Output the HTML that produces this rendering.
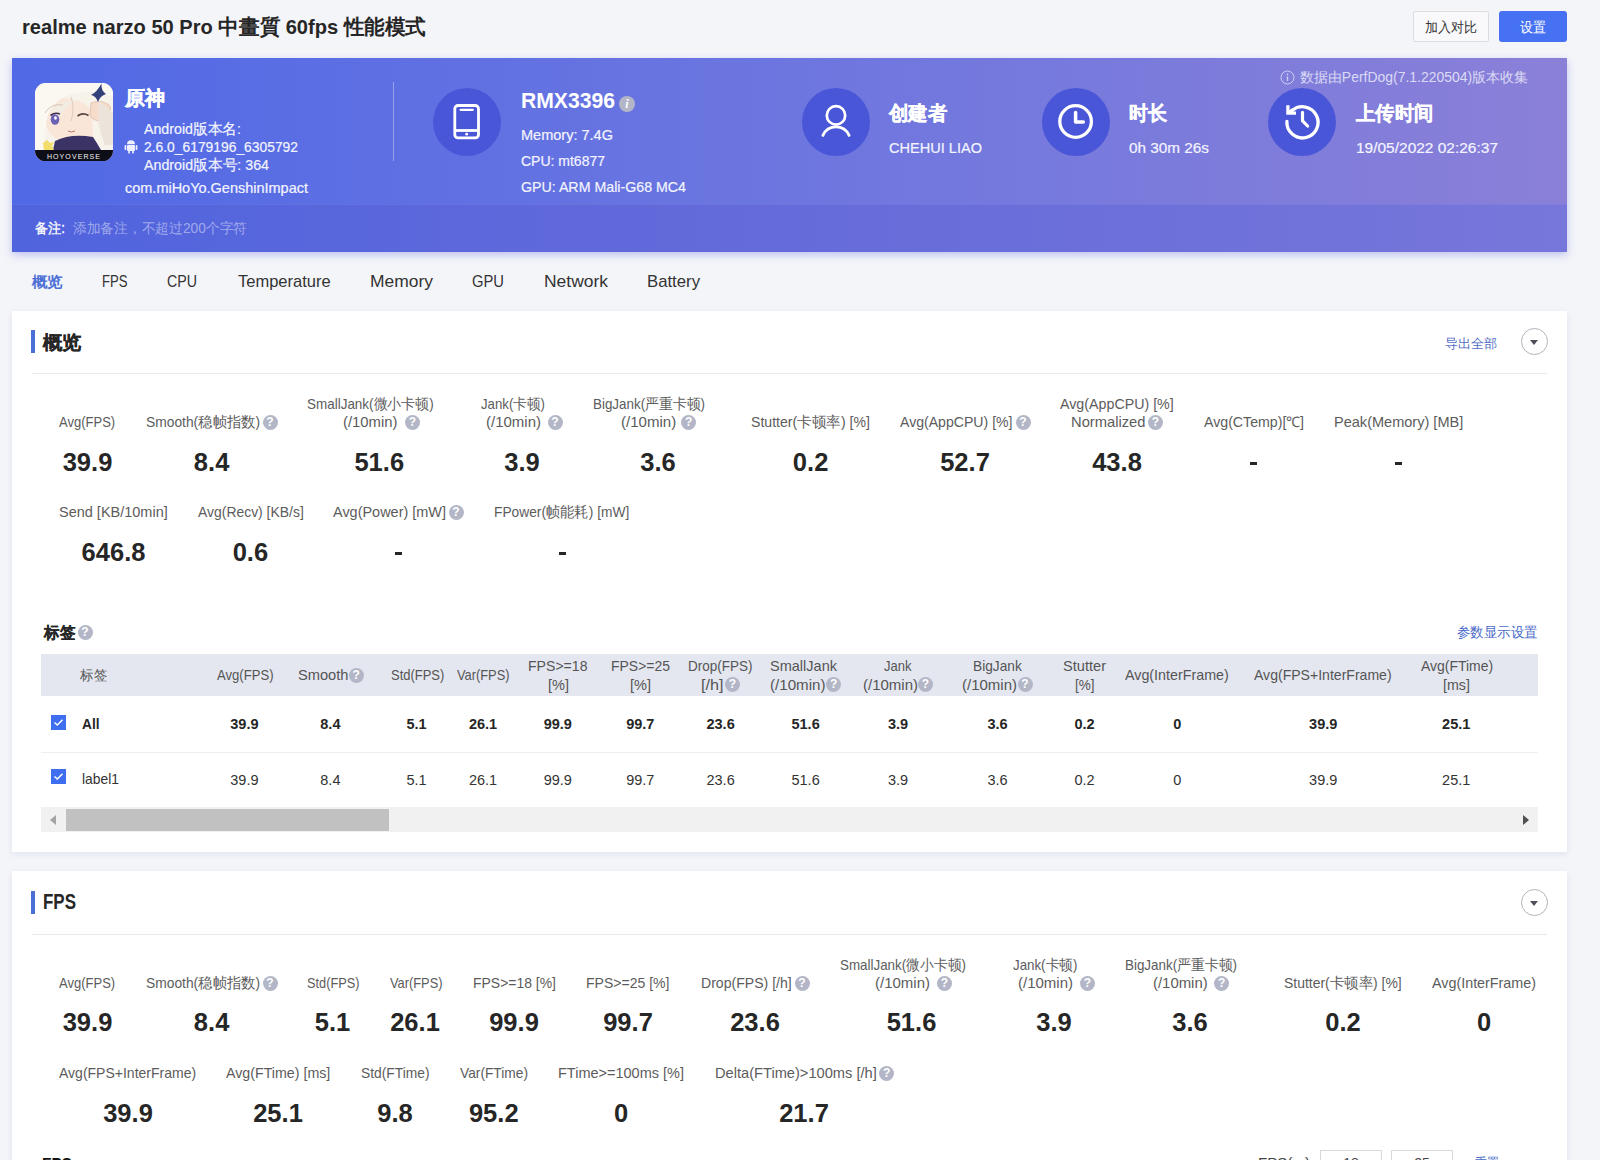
<!DOCTYPE html><html><head><meta charset="utf-8"><title>PerfDog</title><style>

html,body{margin:0;padding:0;}
body{width:1600px;height:1160px;overflow:hidden;position:relative;background:#f4f5f9;font-family:"Liberation Sans",sans-serif;}
.t{position:absolute;white-space:nowrap;}
.q{position:absolute;border-radius:50%;color:#fff;text-align:center;font-weight:700;}

</style></head><body>
<div class="t" id="t1" style="left:22.00px;top:16.57px;font-size:20.50px;line-height:20.50px;color:#262626;font-weight:700;transform:scaleX(0.9794);transform-origin:0 0;">realme narzo 50 Pro 中畫質 60fps 性能模式</div>
<div style="position:absolute;left:1413px;top:11px;width:74px;height:29px;border:1px solid #dcdde3;background:#f9f9fb;border-radius:2px"></div>
<div class="t" id="t2" style="left:1451.00px;top:20.10px;font-size:14.00px;line-height:14.00px;color:#333;font-weight:400;transform:translateX(-50%) scaleX(0.9286);transform-origin:50% 0;">加入对比</div>
<div style="position:absolute;left:1499px;top:11px;width:68px;height:31px;background:#4571f2;border-radius:3px"></div>
<div class="t" id="t3" style="left:1533.00px;top:20.10px;font-size:14.00px;line-height:14.00px;color:#fff;font-weight:400;transform:translateX(-50%) scaleX(0.9286);transform-origin:50% 0;">设置</div>
<div id="banner" style="position:absolute;left:12px;top:58px;width:1555px;height:194px;background:linear-gradient(90deg,#5069e6 0%,#6a75e0 45%,#8a80d8 100%);box-shadow:0 3px 8px rgba(90,100,220,0.35)"></div>
<div style="position:absolute;left:12px;top:204px;width:1555px;height:48px;border-top:1px solid rgba(255,255,255,0.07);box-sizing:border-box;background:linear-gradient(90deg,#5064de 0%,#636ada 45%,#7776da 100%)"></div>
<svg style="position:absolute;left:35px;top:82.5px" width="78" height="78.5" viewBox="0 0 78 78.5">
<defs><clipPath id="ic"><rect x="0" y="0" width="78" height="78.5" rx="11" ry="11"/></clipPath></defs>
<g clip-path="url(#ic)">
<rect width="78" height="79" fill="#f7f2ea"/>
<path d="M12 20 Q20 14 34 16 Q50 18 57 28 L58 56 Q44 62 26 58 Q12 52 11 40 Z" fill="#f9e6d8"/>
<path d="M0 0 L78 0 L78 14 Q60 6 40 10 Q22 14 14 30 Q8 44 10 70 L0 70 Z" fill="#fbf8f2"/>
<path d="M14 30 Q24 16 42 18 Q30 22 26 34 Q22 26 14 30Z" fill="#f3ece2"/>
<path d="M10 30 Q16 20 28 22" stroke="#cdb8a8" stroke-width="0.8" fill="none"/>
<path d="M36 14 Q40 26 36 38" stroke="#d8c4b4" stroke-width="0.8" fill="none"/>
<path d="M15.5 32.5 Q20 29 25 31" stroke="#3a3050" stroke-width="1.6" fill="none"/>
<ellipse cx="20" cy="36.5" rx="4.3" ry="5.2" fill="#6a62b2"/>
<ellipse cx="20.5" cy="35" rx="1.4" ry="1.8" fill="#fff"/>
<path d="M42.5 33 Q48 29 53.5 32.5" stroke="#5a4440" stroke-width="1.6" fill="none"/>
<path d="M33 48 Q36 50 40 48" stroke="#b07a70" stroke-width="1" fill="none"/>
<path d="M56 20 Q66 16 74 22 Q78 26 72 30 L64 28 Q70 32 66 38 Q58 38 55 32 Z" fill="#f6dccb" stroke="#d9b8a6" stroke-width="0.7"/>
<path d="M66.5 0.5 Q62 9 56 12 Q61 13 63 19 Q65 13 71 11 Q66 8 66.5 0.5Z" fill="#334079"/>
<path d="M64 18 Q60 40 70 62 L78 62 L78 30 Z" fill="#ece4da"/>
<path d="M20 58 Q36 50 58 54 Q62 60 66 67 L18 67 Z" fill="#3b3266"/>
<path d="M8 60 L12 57 L15 60 L19 59 L17 63 L19 67 L9 67 Z" fill="#f2dc6a"/>
<rect x="0" y="67" width="78" height="12" fill="#0e0e18"/>
<text x="39" y="75.6" text-anchor="middle" font-family="Liberation Sans" font-size="7" font-weight="400" fill="#f4f4f4" letter-spacing="1.1" style="-webkit-text-stroke:0.2px #fff">HOYOVERSE</text>
</g></svg>
<div class="t" id="t4" style="left:124.50px;top:89.42px;font-size:19.50px;line-height:19.50px;color:#ffffff;font-weight:700;-webkit-text-stroke:0.4px currentColor;">原神</div>
<svg style="position:absolute;left:124px;top:139px" width="14" height="15" viewBox="0 0 14 15">
<path d="M3 5.2 A4 4 0 0 1 11 5.2 Z" fill="#eef0ff"/>
<rect x="3" y="6" width="8" height="6" rx="1" fill="#eef0ff"/>
<rect x="0.6" y="6" width="1.7" height="5" rx="0.85" fill="#eef0ff"/>
<rect x="11.7" y="6" width="1.7" height="5" rx="0.85" fill="#eef0ff"/>
<rect x="4.2" y="11" width="1.7" height="3.5" rx="0.85" fill="#eef0ff"/>
<rect x="8.1" y="11" width="1.7" height="3.5" rx="0.85" fill="#eef0ff"/>
</svg>
<div class="t" id="t5" style="left:144.00px;top:121.67px;font-size:14.50px;line-height:14.50px;color:#f3f4ff;font-weight:400;-webkit-text-stroke:0.2px currentColor;transform:scaleX(0.9796);transform-origin:0 0;">Android版本名:</div>
<div class="t" id="t6" style="left:144.00px;top:139.68px;font-size:14.50px;line-height:14.50px;color:#f3f4ff;font-weight:400;-webkit-text-stroke:0.2px currentColor;transform:scaleX(0.9549);transform-origin:0 0;">2.6.0_6179196_6305792</div>
<div class="t" id="t7" style="left:144.00px;top:157.68px;font-size:14.50px;line-height:14.50px;color:#f3f4ff;font-weight:400;-webkit-text-stroke:0.2px currentColor;transform:scaleX(0.9824);transform-origin:0 0;">Android版本号: 364</div>
<div class="t" id="t8" style="left:124.50px;top:180.68px;font-size:14.50px;line-height:14.50px;color:#f3f4ff;font-weight:400;-webkit-text-stroke:0.2px currentColor;transform:scaleX(0.9988);transform-origin:0 0;">com.miHoYo.GenshinImpact</div>
<div style="position:absolute;left:393px;top:82px;width:1px;height:79px;background:rgba(255,255,255,0.35)"></div>
<div style="position:absolute;left:432.5px;top:88.0px;width:68px;height:68px;border-radius:50%;background:#4a56d8"></div>
<svg style="position:absolute;left:449px;top:102px" width="34" height="40" viewBox="0 0 34 40">
<rect x="5.8" y="3.5" width="23.7" height="32.4" rx="3.2" fill="none" stroke="#fff" stroke-width="2.8"/>
<line x1="11.6" y1="7.8" x2="23.8" y2="7.8" stroke="#fff" stroke-width="2.3" stroke-linecap="round"/>
<line x1="5.8" y1="28.5" x2="29.5" y2="28.5" stroke="#fff" stroke-width="2.8"/>
<circle cx="17.7" cy="32.2" r="1.4" fill="#fff"/>
</svg>
<div class="t" id="t9" style="left:521.00px;top:90.38px;font-size:22.50px;line-height:22.50px;color:#ffffff;font-weight:700;transform:scaleX(0.9394);transform-origin:0 0;">RMX3396</div>
<div class="q" style="left:619px;top:96px;width:16px;height:16px;background:#b3b6c8;font-size:12px;line-height:16px;font-style:italic;font-weight:700;font-family:'Liberation Serif',serif">i</div>
<div class="t" id="t10" style="left:521.00px;top:127.67px;font-size:14.50px;line-height:14.50px;color:#f3f4ff;font-weight:400;-webkit-text-stroke:0.2px currentColor;transform:scaleX(1.0015);transform-origin:0 0;">Memory: 7.4G</div>
<div class="t" id="t11" style="left:521.00px;top:153.68px;font-size:14.50px;line-height:14.50px;color:#f3f4ff;font-weight:400;-webkit-text-stroke:0.2px currentColor;transform:scaleX(0.9650);transform-origin:0 0;">CPU: mt6877</div>
<div class="t" id="t12" style="left:521.00px;top:179.68px;font-size:14.50px;line-height:14.50px;color:#f3f4ff;font-weight:400;-webkit-text-stroke:0.2px currentColor;transform:scaleX(0.9798);transform-origin:0 0;">GPU: ARM Mali-G68 MC4</div>
<div style="position:absolute;left:802.0px;top:88.0px;width:68px;height:68px;border-radius:50%;background:#4a56d8"></div>
<svg style="position:absolute;left:816px;top:102px" width="40" height="40" viewBox="0 0 40 40">
<circle cx="20" cy="13.4" r="9.2" fill="none" stroke="#fff" stroke-width="2.7"/>
<path d="M6.9 33.4 A14.3 14.3 0 0 1 33.1 33.4" fill="none" stroke="#fff" stroke-width="2.8" stroke-linecap="round"/>
</svg>
<div class="t" id="t13" style="left:889.00px;top:103.00px;font-size:20.00px;line-height:20.00px;color:#ffffff;font-weight:700;-webkit-text-stroke:0.4px currentColor;transform:scaleX(0.9667);transform-origin:0 0;">创建者</div>
<div class="t" id="t14" style="left:889.00px;top:140.05px;font-size:15.00px;line-height:15.00px;color:#f3f4ff;font-weight:400;-webkit-text-stroke:0.2px currentColor;transform:scaleX(0.9702);transform-origin:0 0;">CHEHUI LIAO</div>
<div style="position:absolute;left:1041.5px;top:88.0px;width:68px;height:68px;border-radius:50%;background:#4a56d8"></div>
<svg style="position:absolute;left:1055.5px;top:102px" width="40" height="40" viewBox="0 0 40 40">
<circle cx="19.6" cy="19.5" r="15.8" fill="none" stroke="#fff" stroke-width="3.3"/>
<path d="M19.6 10.5 L19.6 19.9 L27.3 19.9" fill="none" stroke="#fff" stroke-width="3.5" stroke-linecap="round" stroke-linejoin="round"/>
</svg>
<div class="t" id="t15" style="left:1129.00px;top:103.00px;font-size:20.00px;line-height:20.00px;color:#ffffff;font-weight:700;-webkit-text-stroke:0.4px currentColor;transform:scaleX(0.9500);transform-origin:0 0;">时长</div>
<div class="t" id="t16" style="left:1129.00px;top:140.05px;font-size:15.00px;line-height:15.00px;color:#f3f4ff;font-weight:400;-webkit-text-stroke:0.2px currentColor;transform:scaleX(1.0205);transform-origin:0 0;">0h 30m 26s</div>
<div style="position:absolute;left:1267.5px;top:88.0px;width:68px;height:68px;border-radius:50%;background:#4a56d8"></div>
<svg style="position:absolute;left:1281.5px;top:102px" width="40" height="40" viewBox="0 0 40 40">
<path d="M10.2 8.6 A15.6 15.6 0 1 1 4.9 19.4" fill="none" stroke="#fff" stroke-width="3.3" stroke-linecap="round"/>
<path d="M5.9 3.2 L5.9 11.2 L14 11.2" fill="none" stroke="#fff" stroke-width="3.3" stroke-linecap="butt" stroke-linejoin="miter"/>
<line x1="6.5" y1="10.6" x2="11" y2="7.5" stroke="#fff" stroke-width="3"/>
<path d="M20.5 10.4 L20.5 18.8 L25.6 24" fill="none" stroke="#fff" stroke-width="3.2" stroke-linecap="round" stroke-linejoin="round"/>
</svg>
<div class="t" id="t17" style="left:1356.00px;top:103.00px;font-size:20.00px;line-height:20.00px;color:#ffffff;font-weight:700;-webkit-text-stroke:0.4px currentColor;transform:scaleX(0.9625);transform-origin:0 0;">上传时间</div>
<div class="t" id="t18" style="left:1356.00px;top:140.05px;font-size:15.00px;line-height:15.00px;color:#f3f4ff;font-weight:400;-webkit-text-stroke:0.2px currentColor;transform:scaleX(1.0317);transform-origin:0 0;">19/05/2022 02:26:37</div>
<svg style="position:absolute;left:1279.5px;top:69.5px" width="15" height="15" viewBox="0 0 15 15">
<circle cx="7.5" cy="7.5" r="6.5" fill="none" stroke="rgba(255,255,255,0.6)" stroke-width="1"/>
<rect x="6.8" y="6.3" width="1.4" height="4.8" fill="rgba(255,255,255,0.6)"/><circle cx="7.5" cy="4.3" r="0.9" fill="rgba(255,255,255,0.6)"/>
</svg>
<div class="t" id="t19" style="left:1299.50px;top:70.10px;font-size:14.00px;line-height:14.00px;color:rgba(255,255,255,0.72);font-weight:400;transform:scaleX(0.9967);transform-origin:0 0;">数据由PerfDog(7.1.220504)版本收集</div>
<div class="t" id="t20" style="left:35.00px;top:221.10px;font-size:14.00px;line-height:14.00px;color:#fff;font-weight:400;-webkit-text-stroke:0.35px currentColor;transform:scaleX(0.9407);transform-origin:0 0;">备注:</div>
<div class="t" id="t21" style="left:73.00px;top:221.10px;font-size:14.00px;line-height:14.00px;color:rgba(255,255,255,0.45);font-weight:400;transform:scaleX(0.9811);transform-origin:0 0;">添加备注，不超过200个字符</div>
<div class="t" id="t22" style="left:31.50px;top:274.00px;font-size:15.30px;line-height:15.30px;color:#4b6fd6;font-weight:700;transform:scaleX(1.0333);transform-origin:0 0;">概览</div>
<div class="t" id="t23" style="left:102.00px;top:272.95px;font-size:17.00px;line-height:17.00px;color:#333;font-weight:400;transform:scaleX(0.7713);transform-origin:0 0;">FPS</div>
<div class="t" id="t24" style="left:167.00px;top:272.95px;font-size:17.00px;line-height:17.00px;color:#333;font-weight:400;transform:scaleX(0.8355);transform-origin:0 0;">CPU</div>
<div class="t" id="t25" style="left:238.00px;top:272.95px;font-size:17.00px;line-height:17.00px;color:#333;font-weight:400;transform:scaleX(0.9703);transform-origin:0 0;">Temperature</div>
<div class="t" id="t26" style="left:370.00px;top:272.95px;font-size:17.00px;line-height:17.00px;color:#333;font-weight:400;transform:scaleX(1.0260);transform-origin:0 0;">Memory</div>
<div class="t" id="t27" style="left:472.00px;top:272.95px;font-size:17.00px;line-height:17.00px;color:#333;font-weight:400;transform:scaleX(0.8685);transform-origin:0 0;">GPU</div>
<div class="t" id="t28" style="left:543.60px;top:272.95px;font-size:17.00px;line-height:17.00px;color:#333;font-weight:400;transform:scaleX(1.0263);transform-origin:0 0;">Network</div>
<div class="t" id="t29" style="left:646.70px;top:272.95px;font-size:17.00px;line-height:17.00px;color:#333;font-weight:400;transform:scaleX(0.9840);transform-origin:0 0;">Battery</div>
<div style="position:absolute;left:12px;top:311px;width:1555px;height:541px;background:#fff;box-shadow:0 2px 6px rgba(100,110,170,0.13)"></div>
<div style="position:absolute;left:12px;top:871px;width:1555px;height:400px;background:#fff;box-shadow:0 2px 6px rgba(100,110,170,0.13)"></div>
<div style="position:absolute;left:31.25px;top:330.10px;width:3.75px;height:23px;background:#4b6fd6"></div>
<div class="t" id="t30" style="left:43.00px;top:332.98px;font-size:19.20px;line-height:19.20px;color:#262626;font-weight:700;-webkit-text-stroke:0.25px currentColor;transform:scaleX(1.0132);transform-origin:0 0;">概览</div>
<div style="position:absolute;left:32px;top:372.5px;width:1515px;height:1.5px;background:#e8e9ee"></div>
<div class="t" id="t31" style="left:1445.00px;top:336.75px;font-size:13.00px;line-height:13.00px;color:#5470c4;font-weight:400;transform:scaleX(1.0096);transform-origin:0 0;">导出全部</div>
<div style="position:absolute;left:1520.5px;top:327.5px;width:25px;height:25px;border:1px solid #b2b3bb;border-radius:50%"></div>
<div style="position:absolute;left:1529.75px;top:340.0px;width:0;height:0;border-left:4.25px solid transparent;border-right:4.25px solid transparent;border-top:5.6px solid #4e5058"></div>
<div style="position:absolute;left:31.25px;top:891.10px;width:3.75px;height:23px;background:#4b6fd6"></div>
<div class="t" id="t32" style="left:43.00px;top:891.73px;font-size:21.50px;line-height:21.50px;color:#262626;font-weight:700;transform:scaleX(0.7889);transform-origin:0 0;">FPS</div>
<div style="position:absolute;left:32px;top:933.5px;width:1515px;height:1.5px;background:#e8e9ee"></div>
<div style="position:absolute;left:1520.5px;top:888.5px;width:25px;height:25px;border:1px solid #b2b3bb;border-radius:50%"></div>
<div style="position:absolute;left:1529.75px;top:901.0px;width:0;height:0;border-left:4.25px solid transparent;border-right:4.25px solid transparent;border-top:5.6px solid #4e5058"></div>
<div class="t" id="t33" style="left:59.00px;top:414.88px;font-size:14.50px;line-height:14.50px;color:#5c5c5c;font-weight:400;transform:scaleX(0.8979);transform-origin:0 0;">Avg(FPS)</div>
<div class="t" id="t34" style="left:87.50px;top:449.62px;font-size:25.50px;line-height:25.50px;color:#262626;font-weight:700;transform:translateX(-50%) scaleX(1.0000);transform-origin:50% 0;">39.9</div>
<div class="t" id="t35" style="left:145.50px;top:414.88px;font-size:14.50px;line-height:14.50px;color:#5c5c5c;font-weight:400;transform:scaleX(0.9529);transform-origin:0 0;">Smooth(稳帧指数)</div>
<div class="q" style="left:262.50px;top:414.50px;width:15px;height:15px;background:#b3b6c6;font-size:12.0px;line-height:15px">?</div>
<div class="t" id="t36" style="left:211.60px;top:449.62px;font-size:25.50px;line-height:25.50px;color:#262626;font-weight:700;transform:translateX(-50%) scaleX(1.0000);transform-origin:50% 0;">8.4</div>
<div class="t" id="t37" style="left:307.00px;top:396.88px;font-size:14.50px;line-height:14.50px;color:#5c5c5c;font-weight:400;transform:scaleX(0.9283);transform-origin:0 0;">SmallJank(微小卡顿)</div>
<div class="t" id="t38" style="left:343.00px;top:414.88px;font-size:14.50px;line-height:14.50px;color:#5c5c5c;font-weight:400;transform:scaleX(1.0247);transform-origin:0 0;">(/10min)</div>
<div class="q" style="left:405.00px;top:414.50px;width:15px;height:15px;background:#b3b6c6;font-size:12.0px;line-height:15px">?</div>
<div class="t" id="t39" style="left:379.25px;top:449.62px;font-size:25.50px;line-height:25.50px;color:#262626;font-weight:700;transform:translateX(-50%) scaleX(1.0000);transform-origin:50% 0;">51.6</div>
<div class="t" id="t40" style="left:481.00px;top:396.88px;font-size:14.50px;line-height:14.50px;color:#5c5c5c;font-weight:400;transform:scaleX(0.9104);transform-origin:0 0;">Jank(卡顿)</div>
<div class="t" id="t41" style="left:485.75px;top:414.88px;font-size:14.50px;line-height:14.50px;color:#5c5c5c;font-weight:400;transform:scaleX(1.0341);transform-origin:0 0;">(/10min)</div>
<div class="q" style="left:547.50px;top:414.50px;width:15px;height:15px;background:#b3b6c6;font-size:12.0px;line-height:15px">?</div>
<div class="t" id="t42" style="left:522.00px;top:449.62px;font-size:25.50px;line-height:25.50px;color:#262626;font-weight:700;transform:translateX(-50%) scaleX(1.0000);transform-origin:50% 0;">3.9</div>
<div class="t" id="t43" style="left:592.50px;top:396.88px;font-size:14.50px;line-height:14.50px;color:#5c5c5c;font-weight:400;transform:scaleX(0.9237);transform-origin:0 0;">BigJank(严重卡顿)</div>
<div class="t" id="t44" style="left:621.00px;top:414.88px;font-size:14.50px;line-height:14.50px;color:#5c5c5c;font-weight:400;transform:scaleX(1.0388);transform-origin:0 0;">(/10min)</div>
<div class="q" style="left:681.25px;top:414.50px;width:15px;height:15px;background:#b3b6c6;font-size:12.0px;line-height:15px">?</div>
<div class="t" id="t45" style="left:658.00px;top:449.62px;font-size:25.50px;line-height:25.50px;color:#262626;font-weight:700;transform:translateX(-50%) scaleX(1.0000);transform-origin:50% 0;">3.6</div>
<div class="t" id="t46" style="left:751.00px;top:414.88px;font-size:14.50px;line-height:14.50px;color:#5c5c5c;font-weight:400;transform:scaleX(0.9725);transform-origin:0 0;">Stutter(卡顿率) [%]</div>
<div class="t" id="t47" style="left:810.60px;top:449.62px;font-size:25.50px;line-height:25.50px;color:#262626;font-weight:700;transform:translateX(-50%) scaleX(1.0000);transform-origin:50% 0;">0.2</div>
<div class="t" id="t48" style="left:900.00px;top:414.88px;font-size:14.50px;line-height:14.50px;color:#5c5c5c;font-weight:400;transform:scaleX(0.9717);transform-origin:0 0;">Avg(AppCPU) [%]</div>
<div class="q" style="left:1015.50px;top:414.50px;width:15px;height:15px;background:#b3b6c6;font-size:12.0px;line-height:15px">?</div>
<div class="t" id="t49" style="left:965.00px;top:449.62px;font-size:25.50px;line-height:25.50px;color:#262626;font-weight:700;transform:translateX(-50%) scaleX(1.0000);transform-origin:50% 0;">52.7</div>
<div class="t" id="t50" style="left:1060.00px;top:396.88px;font-size:14.50px;line-height:14.50px;color:#5c5c5c;font-weight:400;transform:scaleX(0.9825);transform-origin:0 0;">Avg(AppCPU) [%]</div>
<div class="t" id="t51" style="left:1071.00px;top:414.88px;font-size:14.50px;line-height:14.50px;color:#5c5c5c;font-weight:400;transform:scaleX(1.0158);transform-origin:0 0;">Normalized</div>
<div class="q" style="left:1148.00px;top:414.50px;width:15px;height:15px;background:#b3b6c6;font-size:12.0px;line-height:15px">?</div>
<div class="t" id="t52" style="left:1117.00px;top:449.62px;font-size:25.50px;line-height:25.50px;color:#262626;font-weight:700;transform:translateX(-50%) scaleX(1.0000);transform-origin:50% 0;">43.8</div>
<div class="t" id="t53" style="left:1203.75px;top:414.88px;font-size:14.50px;line-height:14.50px;color:#5c5c5c;font-weight:400;transform:scaleX(0.9768);transform-origin:0 0;">Avg(CTemp)[℃]</div>
<div style="position:absolute;left:1250.2px;top:462.0px;width:7px;height:3px;background:#262626"></div>
<div class="t" id="t54" style="left:1333.75px;top:414.88px;font-size:14.50px;line-height:14.50px;color:#5c5c5c;font-weight:400;transform:scaleX(1.0025);transform-origin:0 0;">Peak(Memory) [MB]</div>
<div style="position:absolute;left:1395.2px;top:462.0px;width:7px;height:3px;background:#262626"></div>
<div class="t" id="t55" style="left:58.75px;top:505.18px;font-size:14.50px;line-height:14.50px;color:#5c5c5c;font-weight:400;transform:scaleX(0.9993);transform-origin:0 0;">Send [KB/10min]</div>
<div class="t" id="t56" style="left:113.50px;top:539.62px;font-size:25.50px;line-height:25.50px;color:#262626;font-weight:700;transform:translateX(-50%) scaleX(1.0000);transform-origin:50% 0;">646.8</div>
<div class="t" id="t57" style="left:197.50px;top:505.18px;font-size:14.50px;line-height:14.50px;color:#5c5c5c;font-weight:400;transform:scaleX(0.9603);transform-origin:0 0;">Avg(Recv) [KB/s]</div>
<div class="t" id="t58" style="left:250.40px;top:539.62px;font-size:25.50px;line-height:25.50px;color:#262626;font-weight:700;transform:translateX(-50%) scaleX(1.0000);transform-origin:50% 0;">0.6</div>
<div class="t" id="t59" style="left:333.00px;top:505.18px;font-size:14.50px;line-height:14.50px;color:#5c5c5c;font-weight:400;transform:scaleX(0.9970);transform-origin:0 0;">Avg(Power) [mW]</div>
<div class="q" style="left:448.50px;top:504.80px;width:15px;height:15px;background:#b3b6c6;font-size:12.0px;line-height:15px">?</div>
<div style="position:absolute;left:395.0px;top:552.0px;width:7px;height:3px;background:#262626"></div>
<div class="t" id="t60" style="left:493.75px;top:505.18px;font-size:14.50px;line-height:14.50px;color:#5c5c5c;font-weight:400;transform:scaleX(0.9493);transform-origin:0 0;">FPower(帧能耗) [mW]</div>
<div style="position:absolute;left:558.5px;top:552.0px;width:7px;height:3px;background:#262626"></div>
<div class="t" id="t61" style="left:43.75px;top:624.83px;font-size:15.50px;line-height:15.50px;color:#262626;font-weight:700;-webkit-text-stroke:0.15px currentColor;transform:scaleX(0.9688);transform-origin:0 0;">标签</div>
<div class="q" style="left:77.50px;top:625.00px;width:15px;height:15px;background:#b3b6c6;font-size:12.0px;line-height:15px">?</div>
<div class="t" id="t62" style="left:1457.00px;top:626.02px;font-size:13.50px;line-height:13.50px;color:#4a6bc8;font-weight:400;transform:scaleX(0.9583);transform-origin:0 0;">参数显示设置</div>
<div style="position:absolute;left:41px;top:654px;width:1497px;height:42px;background:#e4e7f0"></div>
<div class="t" id="t63" style="left:80.20px;top:668.43px;font-size:14.20px;line-height:14.20px;color:#555;font-weight:400;transform:scaleX(0.9643);transform-origin:0 0;">标签</div>
<div class="t" id="t64" style="left:216.70px;top:668.43px;font-size:14.20px;line-height:14.20px;color:#555;font-weight:400;transform:scaleX(0.9227);transform-origin:0 0;">Avg(FPS)</div>
<div class="t" id="t65" style="left:297.50px;top:668.43px;font-size:14.20px;line-height:14.20px;color:#555;font-weight:400;transform:scaleX(1.0326);transform-origin:0 0;">Smooth</div>
<div class="q" style="left:348.75px;top:667.80px;width:15px;height:15px;background:#b3b6c6;font-size:12.0px;line-height:15px">?</div>
<div class="t" id="t66" style="left:390.50px;top:668.43px;font-size:14.20px;line-height:14.20px;color:#555;font-weight:400;transform:scaleX(0.9127);transform-origin:0 0;">Std(FPS)</div>
<div class="t" id="t67" style="left:457.00px;top:668.43px;font-size:14.20px;line-height:14.20px;color:#555;font-weight:400;transform:scaleX(0.9040);transform-origin:0 0;">Var(FPS)</div>
<div class="t" id="t68" style="left:528.00px;top:659.18px;font-size:14.20px;line-height:14.20px;color:#555;font-weight:400;transform:scaleX(0.9924);transform-origin:0 0;">FPS&gt;=18</div>
<div class="t" id="t69" style="left:547.50px;top:677.93px;font-size:14.20px;line-height:14.20px;color:#555;font-weight:400;transform:scaleX(1.0244);transform-origin:0 0;">[%]</div>
<div class="t" id="t70" style="left:610.50px;top:659.18px;font-size:14.20px;line-height:14.20px;color:#555;font-weight:400;transform:scaleX(0.9841);transform-origin:0 0;">FPS&gt;=25</div>
<div class="t" id="t71" style="left:629.50px;top:677.93px;font-size:14.20px;line-height:14.20px;color:#555;font-weight:400;transform:scaleX(1.0244);transform-origin:0 0;">[%]</div>
<div class="t" id="t72" style="left:688.00px;top:659.18px;font-size:14.20px;line-height:14.20px;color:#555;font-weight:400;transform:scaleX(0.9514);transform-origin:0 0;">Drop(FPS)</div>
<div class="t" id="t73" style="left:701.25px;top:677.93px;font-size:14.20px;line-height:14.20px;color:#555;font-weight:400;transform:scaleX(1.1410);transform-origin:0 0;">[/h]</div>
<div class="q" style="left:725.00px;top:677.30px;width:15px;height:15px;background:#b3b6c6;font-size:12.0px;line-height:15px">?</div>
<div class="t" id="t74" style="left:770.00px;top:659.18px;font-size:14.20px;line-height:14.20px;color:#555;font-weight:400;transform:scaleX(1.0236);transform-origin:0 0;">SmallJank</div>
<div class="t" id="t75" style="left:770.00px;top:677.93px;font-size:14.20px;line-height:14.20px;color:#555;font-weight:400;transform:scaleX(1.0663);transform-origin:0 0;">(/10min)</div>
<div class="q" style="left:826.25px;top:677.30px;width:15px;height:15px;background:#b3b6c6;font-size:12.0px;line-height:15px">?</div>
<div class="t" id="t76" style="left:883.75px;top:659.18px;font-size:14.20px;line-height:14.20px;color:#555;font-weight:400;transform:scaleX(0.9176);transform-origin:0 0;">Jank</div>
<div class="t" id="t77" style="left:862.50px;top:677.93px;font-size:14.20px;line-height:14.20px;color:#555;font-weight:400;transform:scaleX(1.0567);transform-origin:0 0;">(/10min)</div>
<div class="q" style="left:918.00px;top:677.30px;width:15px;height:15px;background:#b3b6c6;font-size:12.0px;line-height:15px">?</div>
<div class="t" id="t78" style="left:973.00px;top:659.18px;font-size:14.20px;line-height:14.20px;color:#555;font-weight:400;transform:scaleX(0.9656);transform-origin:0 0;">BigJank</div>
<div class="t" id="t79" style="left:962.00px;top:677.93px;font-size:14.20px;line-height:14.20px;color:#555;font-weight:400;transform:scaleX(1.0567);transform-origin:0 0;">(/10min)</div>
<div class="q" style="left:1017.50px;top:677.30px;width:15px;height:15px;background:#b3b6c6;font-size:12.0px;line-height:15px">?</div>
<div class="t" id="t80" style="left:1063.25px;top:659.18px;font-size:14.20px;line-height:14.20px;color:#555;font-weight:400;transform:scaleX(1.0288);transform-origin:0 0;">Stutter</div>
<div class="t" id="t81" style="left:1075.00px;top:677.93px;font-size:14.20px;line-height:14.20px;color:#555;font-weight:400;transform:scaleX(0.9512);transform-origin:0 0;">[%]</div>
<div class="t" id="t82" style="left:1125.00px;top:668.43px;font-size:14.20px;line-height:14.20px;color:#555;font-weight:400;transform:scaleX(1.0070);transform-origin:0 0;">Avg(InterFrame)</div>
<div class="t" id="t83" style="left:1254.00px;top:668.43px;font-size:14.20px;line-height:14.20px;color:#555;font-weight:400;transform:scaleX(0.9906);transform-origin:0 0;">Avg(FPS+InterFrame)</div>
<div class="t" id="t84" style="left:1420.70px;top:659.18px;font-size:14.20px;line-height:14.20px;color:#555;font-weight:400;transform:scaleX(0.9835);transform-origin:0 0;">Avg(FTime)</div>
<div class="t" id="t85" style="left:1443.30px;top:677.93px;font-size:14.20px;line-height:14.20px;color:#555;font-weight:400;transform:scaleX(1.0038);transform-origin:0 0;">[ms]</div>
<svg style="position:absolute;left:51px;top:715.0px" width="15" height="15" viewBox="0 0 15 15"><rect width="15" height="15" fill="#3f6ff0"/><path d="M3.5 7.5 L6.3 10 L11.5 4.8" fill="none" stroke="#fff" stroke-width="1.5"/></svg>
<svg style="position:absolute;left:51px;top:769.0px" width="15" height="15" viewBox="0 0 15 15"><rect width="15" height="15" fill="#3f6ff0"/><path d="M3.5 7.5 L6.3 10 L11.5 4.8" fill="none" stroke="#fff" stroke-width="1.5"/></svg>
<div style="position:absolute;left:41px;top:751.5px;width:1497px;height:1.5px;background:#eeeff3"></div>
<div class="t" id="t86" style="left:82.40px;top:716.92px;font-size:14.50px;line-height:14.50px;color:#262626;font-weight:700;transform:scaleX(0.9444);transform-origin:0 0;">All</div>
<div class="t" id="t87" style="left:82.40px;top:771.97px;font-size:14.50px;line-height:14.50px;color:#333;font-weight:400;transform:scaleX(0.9560);transform-origin:0 0;">label1</div>
<div class="t" id="t88" style="left:244.40px;top:716.92px;font-size:14.50px;line-height:14.50px;color:#262626;font-weight:700;transform:translateX(-50%) scaleX(1.0000);transform-origin:50% 0;">39.9</div>
<div class="t" id="t89" style="left:244.40px;top:772.97px;font-size:14.50px;line-height:14.50px;color:#333;font-weight:400;transform:translateX(-50%) scaleX(1.0000);transform-origin:50% 0;">39.9</div>
<div class="t" id="t90" style="left:330.40px;top:716.92px;font-size:14.50px;line-height:14.50px;color:#262626;font-weight:700;transform:translateX(-50%) scaleX(1.0000);transform-origin:50% 0;">8.4</div>
<div class="t" id="t91" style="left:330.40px;top:772.97px;font-size:14.50px;line-height:14.50px;color:#333;font-weight:400;transform:translateX(-50%) scaleX(1.0000);transform-origin:50% 0;">8.4</div>
<div class="t" id="t92" style="left:416.60px;top:716.92px;font-size:14.50px;line-height:14.50px;color:#262626;font-weight:700;transform:translateX(-50%) scaleX(1.0000);transform-origin:50% 0;">5.1</div>
<div class="t" id="t93" style="left:416.60px;top:772.97px;font-size:14.50px;line-height:14.50px;color:#333;font-weight:400;transform:translateX(-50%) scaleX(1.0000);transform-origin:50% 0;">5.1</div>
<div class="t" id="t94" style="left:483.00px;top:716.92px;font-size:14.50px;line-height:14.50px;color:#262626;font-weight:700;transform:translateX(-50%) scaleX(1.0000);transform-origin:50% 0;">26.1</div>
<div class="t" id="t95" style="left:483.00px;top:772.97px;font-size:14.50px;line-height:14.50px;color:#333;font-weight:400;transform:translateX(-50%) scaleX(1.0000);transform-origin:50% 0;">26.1</div>
<div class="t" id="t96" style="left:557.75px;top:716.92px;font-size:14.50px;line-height:14.50px;color:#262626;font-weight:700;transform:translateX(-50%) scaleX(1.0000);transform-origin:50% 0;">99.9</div>
<div class="t" id="t97" style="left:557.75px;top:772.97px;font-size:14.50px;line-height:14.50px;color:#333;font-weight:400;transform:translateX(-50%) scaleX(1.0000);transform-origin:50% 0;">99.9</div>
<div class="t" id="t98" style="left:640.25px;top:716.92px;font-size:14.50px;line-height:14.50px;color:#262626;font-weight:700;transform:translateX(-50%) scaleX(1.0000);transform-origin:50% 0;">99.7</div>
<div class="t" id="t99" style="left:640.25px;top:772.97px;font-size:14.50px;line-height:14.50px;color:#333;font-weight:400;transform:translateX(-50%) scaleX(1.0000);transform-origin:50% 0;">99.7</div>
<div class="t" id="t100" style="left:720.60px;top:716.92px;font-size:14.50px;line-height:14.50px;color:#262626;font-weight:700;transform:translateX(-50%) scaleX(1.0000);transform-origin:50% 0;">23.6</div>
<div class="t" id="t101" style="left:720.60px;top:772.97px;font-size:14.50px;line-height:14.50px;color:#333;font-weight:400;transform:translateX(-50%) scaleX(1.0000);transform-origin:50% 0;">23.6</div>
<div class="t" id="t102" style="left:805.60px;top:716.92px;font-size:14.50px;line-height:14.50px;color:#262626;font-weight:700;transform:translateX(-50%) scaleX(1.0000);transform-origin:50% 0;">51.6</div>
<div class="t" id="t103" style="left:805.60px;top:772.97px;font-size:14.50px;line-height:14.50px;color:#333;font-weight:400;transform:translateX(-50%) scaleX(1.0000);transform-origin:50% 0;">51.6</div>
<div class="t" id="t104" style="left:898.00px;top:716.92px;font-size:14.50px;line-height:14.50px;color:#262626;font-weight:700;transform:translateX(-50%) scaleX(1.0000);transform-origin:50% 0;">3.9</div>
<div class="t" id="t105" style="left:898.00px;top:772.97px;font-size:14.50px;line-height:14.50px;color:#333;font-weight:400;transform:translateX(-50%) scaleX(1.0000);transform-origin:50% 0;">3.9</div>
<div class="t" id="t106" style="left:997.50px;top:716.92px;font-size:14.50px;line-height:14.50px;color:#262626;font-weight:700;transform:translateX(-50%) scaleX(1.0000);transform-origin:50% 0;">3.6</div>
<div class="t" id="t107" style="left:997.50px;top:772.97px;font-size:14.50px;line-height:14.50px;color:#333;font-weight:400;transform:translateX(-50%) scaleX(1.0000);transform-origin:50% 0;">3.6</div>
<div class="t" id="t108" style="left:1084.50px;top:716.92px;font-size:14.50px;line-height:14.50px;color:#262626;font-weight:700;transform:translateX(-50%) scaleX(1.0000);transform-origin:50% 0;">0.2</div>
<div class="t" id="t109" style="left:1084.50px;top:772.97px;font-size:14.50px;line-height:14.50px;color:#333;font-weight:400;transform:translateX(-50%) scaleX(1.0000);transform-origin:50% 0;">0.2</div>
<div class="t" id="t110" style="left:1177.40px;top:716.92px;font-size:14.50px;line-height:14.50px;color:#262626;font-weight:700;transform:translateX(-50%) scaleX(1.0000);transform-origin:50% 0;">0</div>
<div class="t" id="t111" style="left:1177.40px;top:772.97px;font-size:14.50px;line-height:14.50px;color:#333;font-weight:400;transform:translateX(-50%) scaleX(1.0000);transform-origin:50% 0;">0</div>
<div class="t" id="t112" style="left:1323.20px;top:716.92px;font-size:14.50px;line-height:14.50px;color:#262626;font-weight:700;transform:translateX(-50%) scaleX(1.0000);transform-origin:50% 0;">39.9</div>
<div class="t" id="t113" style="left:1323.20px;top:772.97px;font-size:14.50px;line-height:14.50px;color:#333;font-weight:400;transform:translateX(-50%) scaleX(1.0000);transform-origin:50% 0;">39.9</div>
<div class="t" id="t114" style="left:1456.20px;top:716.92px;font-size:14.50px;line-height:14.50px;color:#262626;font-weight:700;transform:translateX(-50%) scaleX(1.0000);transform-origin:50% 0;">25.1</div>
<div class="t" id="t115" style="left:1456.20px;top:772.97px;font-size:14.50px;line-height:14.50px;color:#333;font-weight:400;transform:translateX(-50%) scaleX(1.0000);transform-origin:50% 0;">25.1</div>
<div style="position:absolute;left:41px;top:807px;width:1497px;height:25px;background:#f1f1f1"></div>
<div style="position:absolute;left:66px;top:809px;width:323px;height:22px;background:#c1c1c1"></div>
<div style="position:absolute;left:50px;top:815px;width:0;height:0;border-top:5px solid transparent;border-bottom:5px solid transparent;border-right:6px solid #a3a3a3"></div>
<div style="position:absolute;left:1523px;top:815px;width:0;height:0;border-top:5px solid transparent;border-bottom:5px solid transparent;border-left:6px solid #505050"></div>
<div class="t" id="t116" style="left:59.30px;top:976.17px;font-size:14.50px;line-height:14.50px;color:#5c5c5c;font-weight:400;transform:scaleX(0.8979);transform-origin:0 0;">Avg(FPS)</div>
<div class="t" id="t117" style="left:87.50px;top:1009.83px;font-size:25.50px;line-height:25.50px;color:#262626;font-weight:700;transform:translateX(-50%) scaleX(1.0000);transform-origin:50% 0;">39.9</div>
<div class="t" id="t118" style="left:145.50px;top:976.17px;font-size:14.50px;line-height:14.50px;color:#5c5c5c;font-weight:400;transform:scaleX(0.9529);transform-origin:0 0;">Smooth(稳帧指数)</div>
<div class="q" style="left:262.50px;top:975.80px;width:15px;height:15px;background:#b3b6c6;font-size:12.0px;line-height:15px">?</div>
<div class="t" id="t119" style="left:211.60px;top:1009.83px;font-size:25.50px;line-height:25.50px;color:#262626;font-weight:700;transform:translateX(-50%) scaleX(1.0000);transform-origin:50% 0;">8.4</div>
<div class="t" id="t120" style="left:307.00px;top:976.17px;font-size:14.50px;line-height:14.50px;color:#5c5c5c;font-weight:400;transform:scaleX(0.8805);transform-origin:0 0;">Std(FPS)</div>
<div class="t" id="t121" style="left:332.50px;top:1009.83px;font-size:25.50px;line-height:25.50px;color:#262626;font-weight:700;transform:translateX(-50%) scaleX(1.0000);transform-origin:50% 0;">5.1</div>
<div class="t" id="t122" style="left:389.50px;top:976.17px;font-size:14.50px;line-height:14.50px;color:#5c5c5c;font-weight:400;transform:scaleX(0.8844);transform-origin:0 0;">Var(FPS)</div>
<div class="t" id="t123" style="left:415.00px;top:1009.83px;font-size:25.50px;line-height:25.50px;color:#262626;font-weight:700;transform:translateX(-50%) scaleX(1.0000);transform-origin:50% 0;">26.1</div>
<div class="t" id="t124" style="left:472.50px;top:976.17px;font-size:14.50px;line-height:14.50px;color:#5c5c5c;font-weight:400;transform:scaleX(0.9623);transform-origin:0 0;">FPS&gt;=18 [%]</div>
<div class="t" id="t125" style="left:514.00px;top:1009.83px;font-size:25.50px;line-height:25.50px;color:#262626;font-weight:700;transform:translateX(-50%) scaleX(1.0000);transform-origin:50% 0;">99.9</div>
<div class="t" id="t126" style="left:586.00px;top:976.17px;font-size:14.50px;line-height:14.50px;color:#5c5c5c;font-weight:400;transform:scaleX(0.9681);transform-origin:0 0;">FPS&gt;=25 [%]</div>
<div class="t" id="t127" style="left:628.00px;top:1009.83px;font-size:25.50px;line-height:25.50px;color:#262626;font-weight:700;transform:translateX(-50%) scaleX(1.0000);transform-origin:50% 0;">99.7</div>
<div class="t" id="t128" style="left:700.50px;top:976.17px;font-size:14.50px;line-height:14.50px;color:#5c5c5c;font-weight:400;transform:scaleX(0.9709);transform-origin:0 0;">Drop(FPS) [/h]</div>
<div class="q" style="left:794.50px;top:975.80px;width:15px;height:15px;background:#b3b6c6;font-size:12.0px;line-height:15px">?</div>
<div class="t" id="t129" style="left:755.00px;top:1009.83px;font-size:25.50px;line-height:25.50px;color:#262626;font-weight:700;transform:translateX(-50%) scaleX(1.0000);transform-origin:50% 0;">23.6</div>
<div class="t" id="t130" style="left:839.50px;top:958.17px;font-size:14.50px;line-height:14.50px;color:#5c5c5c;font-weight:400;transform:scaleX(0.9228);transform-origin:0 0;">SmallJank(微小卡顿)</div>
<div class="t" id="t131" style="left:875.00px;top:976.17px;font-size:14.50px;line-height:14.50px;color:#5c5c5c;font-weight:400;transform:scaleX(1.0341);transform-origin:0 0;">(/10min)</div>
<div class="q" style="left:937.00px;top:975.80px;width:15px;height:15px;background:#b3b6c6;font-size:12.0px;line-height:15px">?</div>
<div class="t" id="t132" style="left:911.50px;top:1009.83px;font-size:25.50px;line-height:25.50px;color:#262626;font-weight:700;transform:translateX(-50%) scaleX(1.0000);transform-origin:50% 0;">51.6</div>
<div class="t" id="t133" style="left:1012.50px;top:958.17px;font-size:14.50px;line-height:14.50px;color:#5c5c5c;font-weight:400;transform:scaleX(0.9175);transform-origin:0 0;">Jank(卡顿)</div>
<div class="t" id="t134" style="left:1017.50px;top:976.17px;font-size:14.50px;line-height:14.50px;color:#5c5c5c;font-weight:400;transform:scaleX(1.0341);transform-origin:0 0;">(/10min)</div>
<div class="q" style="left:1080.00px;top:975.80px;width:15px;height:15px;background:#b3b6c6;font-size:12.0px;line-height:15px">?</div>
<div class="t" id="t135" style="left:1054.00px;top:1009.83px;font-size:25.50px;line-height:25.50px;color:#262626;font-weight:700;transform:translateX(-50%) scaleX(1.0000);transform-origin:50% 0;">3.9</div>
<div class="t" id="t136" style="left:1124.50px;top:958.17px;font-size:14.50px;line-height:14.50px;color:#5c5c5c;font-weight:400;transform:scaleX(0.9245);transform-origin:0 0;">BigJank(严重卡顿)</div>
<div class="t" id="t137" style="left:1153.00px;top:976.17px;font-size:14.50px;line-height:14.50px;color:#5c5c5c;font-weight:400;transform:scaleX(1.0284);transform-origin:0 0;">(/10min)</div>
<div class="q" style="left:1214.20px;top:975.80px;width:15px;height:15px;background:#b3b6c6;font-size:12.0px;line-height:15px">?</div>
<div class="t" id="t138" style="left:1190.00px;top:1009.83px;font-size:25.50px;line-height:25.50px;color:#262626;font-weight:700;transform:translateX(-50%) scaleX(1.0000);transform-origin:50% 0;">3.6</div>
<div class="t" id="t139" style="left:1284.00px;top:976.17px;font-size:14.50px;line-height:14.50px;color:#5c5c5c;font-weight:400;transform:scaleX(0.9619);transform-origin:0 0;">Stutter(卡顿率) [%]</div>
<div class="t" id="t140" style="left:1343.00px;top:1009.83px;font-size:25.50px;line-height:25.50px;color:#262626;font-weight:700;transform:translateX(-50%) scaleX(1.0000);transform-origin:50% 0;">0.2</div>
<div class="t" id="t141" style="left:1432.00px;top:976.17px;font-size:14.50px;line-height:14.50px;color:#5c5c5c;font-weight:400;transform:scaleX(0.9877);transform-origin:0 0;">Avg(InterFrame)</div>
<div class="t" id="t142" style="left:1484.00px;top:1009.83px;font-size:25.50px;line-height:25.50px;color:#262626;font-weight:700;transform:translateX(-50%) scaleX(1.0000);transform-origin:50% 0;">0</div>
<div class="t" id="t143" style="left:59.30px;top:1066.27px;font-size:14.50px;line-height:14.50px;color:#5c5c5c;font-weight:400;transform:scaleX(0.9657);transform-origin:0 0;">Avg(FPS+InterFrame)</div>
<div class="t" id="t144" style="left:128.00px;top:1100.83px;font-size:25.50px;line-height:25.50px;color:#262626;font-weight:700;transform:translateX(-50%) scaleX(1.0000);transform-origin:50% 0;">39.9</div>
<div class="t" id="t145" style="left:226.20px;top:1066.27px;font-size:14.50px;line-height:14.50px;color:#5c5c5c;font-weight:400;transform:scaleX(0.9808);transform-origin:0 0;">Avg(FTime) [ms]</div>
<div class="t" id="t146" style="left:278.00px;top:1100.83px;font-size:25.50px;line-height:25.50px;color:#262626;font-weight:700;transform:translateX(-50%) scaleX(1.0000);transform-origin:50% 0;">25.1</div>
<div class="t" id="t147" style="left:361.00px;top:1066.27px;font-size:14.50px;line-height:14.50px;color:#5c5c5c;font-weight:400;transform:scaleX(0.9518);transform-origin:0 0;">Std(FTime)</div>
<div class="t" id="t148" style="left:395.00px;top:1100.83px;font-size:25.50px;line-height:25.50px;color:#262626;font-weight:700;transform:translateX(-50%) scaleX(1.0000);transform-origin:50% 0;">9.8</div>
<div class="t" id="t149" style="left:459.50px;top:1066.27px;font-size:14.50px;line-height:14.50px;color:#5c5c5c;font-weight:400;transform:scaleX(0.9486);transform-origin:0 0;">Var(FTime)</div>
<div class="t" id="t150" style="left:493.75px;top:1100.83px;font-size:25.50px;line-height:25.50px;color:#262626;font-weight:700;transform:translateX(-50%) scaleX(1.0000);transform-origin:50% 0;">95.2</div>
<div class="t" id="t151" style="left:558.00px;top:1066.27px;font-size:14.50px;line-height:14.50px;color:#5c5c5c;font-weight:400;transform:scaleX(1.0001);transform-origin:0 0;">FTime&gt;=100ms [%]</div>
<div class="t" id="t152" style="left:621.00px;top:1100.83px;font-size:25.50px;line-height:25.50px;color:#262626;font-weight:700;transform:translateX(-50%) scaleX(1.0000);transform-origin:50% 0;">0</div>
<div class="t" id="t153" style="left:714.50px;top:1066.27px;font-size:14.50px;line-height:14.50px;color:#5c5c5c;font-weight:400;transform:scaleX(1.0096);transform-origin:0 0;">Delta(FTime)&gt;100ms [/h]</div>
<div class="q" style="left:879.25px;top:1065.90px;width:15px;height:15px;background:#b3b6c6;font-size:12.0px;line-height:15px">?</div>
<div class="t" id="t154" style="left:804.00px;top:1100.83px;font-size:25.50px;line-height:25.50px;color:#262626;font-weight:700;transform:translateX(-50%) scaleX(1.0000);transform-origin:50% 0;">21.7</div>
<div class="t" id="t155" style="left:42.00px;top:1156.47px;font-size:16.50px;line-height:16.50px;color:#111;font-weight:700;transform:scaleX(0.9348);transform-origin:0 0;">FPS</div>
<div class="t" id="t156" style="left:1257.50px;top:1156.10px;font-size:14.00px;line-height:14.00px;color:#444;font-weight:400;transform:scaleX(1.0781);transform-origin:0 0;">FPS(...)</div>
<div style="position:absolute;left:1319.5px;top:1150px;width:60px;height:30px;border:1px solid #d9d9d9;background:#fff"></div>
<div style="position:absolute;left:1391px;top:1150px;width:60px;height:30px;border:1px solid #d9d9d9;background:#fff"></div>
<div class="t" id="t157" style="left:1351.00px;top:1156.10px;font-size:14.00px;line-height:14.00px;color:#444;font-weight:400;transform:translateX(-50%) scaleX(1.0000);transform-origin:50% 0;">18</div>
<div class="t" id="t158" style="left:1422.00px;top:1156.10px;font-size:14.00px;line-height:14.00px;color:#444;font-weight:400;transform:translateX(-50%) scaleX(1.0000);transform-origin:50% 0;">25</div>
<div class="t" id="t159" style="left:1474.50px;top:1156.53px;font-size:13.50px;line-height:13.50px;color:#4a6bc8;font-weight:400;transform:scaleX(0.8571);transform-origin:0 0;">重置</div>
</body></html>
